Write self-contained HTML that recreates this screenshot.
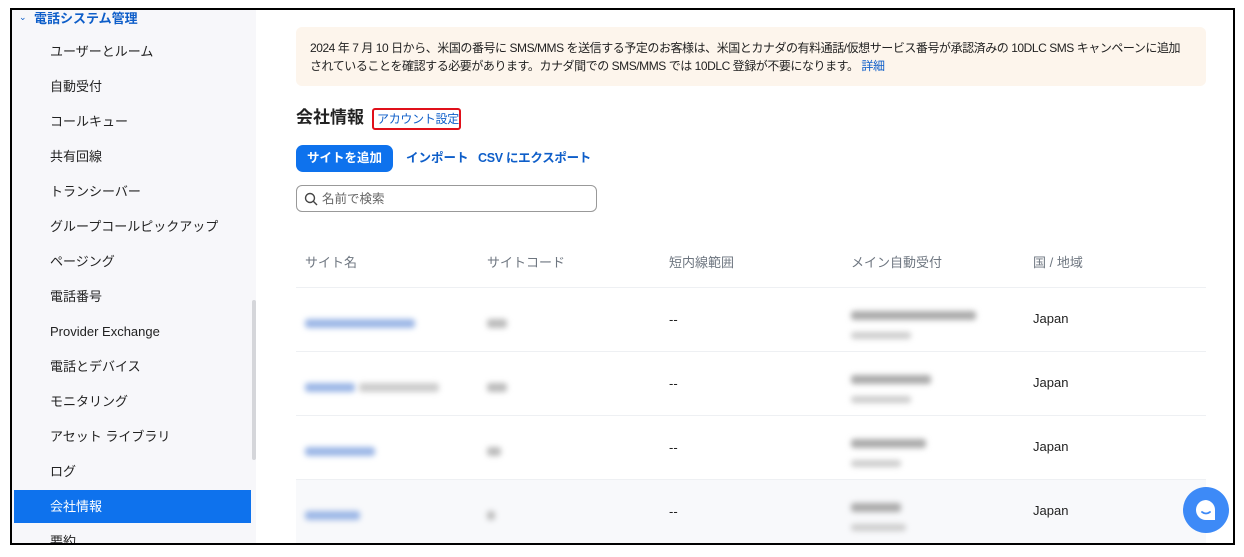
<!DOCTYPE html>
<html><head><meta charset="utf-8"><style>
*{box-sizing:border-box;margin:0;padding:0}
body{width:1244px;height:557px;background:#fff;font-family:"Liberation Sans","Noto Sans CJK JP",sans-serif;position:relative;overflow:hidden;color:#222;line-height:1.2}
#frame{position:absolute;left:10px;top:8px;width:1225px;height:537px;border:2px solid #000;overflow:hidden;background:#fff}
#side{position:absolute;left:0;top:0;width:244px;height:100%;background:#f7f7fa}
.it{position:absolute;left:38px;font-size:13px;color:#222;white-space:nowrap}
#sel{position:absolute;left:2px;top:480px;width:237px;height:33px;background:#0e72ed}
.bl{display:inline-block;filter:blur(3px);border-radius:3px}
.a{position:absolute;white-space:nowrap}
.hdr{font-size:13px;color:#6e7680}
.jp{font-size:13px;color:#222}
.dash{font-size:13px;color:#222}
.row{position:absolute;left:284px;width:910px;border-top:1px solid #eef0f3}
</style></head><body>
<div id="frame">
<div id="side">
 <div class="a" style="left:7px;top:2px;font-size:9px;color:#0e5ec9">⌄</div>
 <div class="a" style="left:22px;top:1px;font-size:13px;color:#0e5ec9;font-weight:bold">電話システム管理</div>
 <div class="it" style="top:34px">ユーザーとルーム</div>
 <div class="it" style="top:69px">自動受付</div>
 <div class="it" style="top:104px">コールキュー</div>
 <div class="it" style="top:139px">共有回線</div>
 <div class="it" style="top:174px">トランシーバー</div>
 <div class="it" style="top:209px">グループコールピックアップ</div>
 <div class="it" style="top:244px">ページング</div>
 <div class="it" style="top:279px">電話番号</div>
 <div class="it" style="top:314px">Provider Exchange</div>
 <div class="it" style="top:349px">電話とデバイス</div>
 <div class="it" style="top:384px">モニタリング</div>
 <div class="it" style="top:419px">アセット ライブラリ</div>
 <div class="it" style="top:454px">ログ</div>
 <div id="sel"></div>
 <div class="it" style="top:489px;color:#fff">会社情報</div>
 <div class="it" style="top:524px">要約</div>
 <div class="a" style="left:240px;top:290px;width:4px;height:160px;background:#d5d6da;border-radius:2px"></div>
</div>
<div class="a" style="left:284px;top:17px;width:910px;height:59px;background:#fdf5ec;border-radius:6px"></div>
<div class="a" style="left:298px;top:29px;font-size:12px;line-height:18px;color:#222;letter-spacing:-0.45px">2024 年 7 月 10 日から、米国の番号に SMS/MMS を送信する予定のお客様は、米国とカナダの有料通話/仮想サービス番号が承認済みの 10DLC SMS キャンペーンに追加<br>されていることを確認する必要があります。カナダ間での SMS/MMS では 10DLC 登録が不要になります。 <span style="color:#0e5ec9">詳細</span></div>
<div class="a" style="left:284px;top:98px;font-size:17px;font-weight:bold;color:#222">会社情報</div>
<div class="a" style="left:360px;top:98px;width:89px;height:22px;border:2px solid #e0101a;border-radius:3px;font-size:12px;color:#0e5ec9;line-height:18px;padding-left:3px;letter-spacing:-0.3px">アカウント設定</div>
<div class="a" style="left:284px;top:135px;width:97px;height:27px;background:#0e72ed;border-radius:7px;color:#fff;font-size:12.5px;font-weight:bold;line-height:27px;text-align:center">サイトを追加</div>
<div class="a" style="left:394px;top:141px;font-size:12.5px;color:#0e5ec9;font-weight:bold;line-height:15px">インポート</div>
<div class="a" style="left:466px;top:141px;font-size:12.5px;color:#0e5ec9;font-weight:bold;line-height:15px;letter-spacing:-0.3px">CSV にエクスポート</div>
<div class="a" style="left:284px;top:175px;width:301px;height:27px;border:1px solid #999;border-radius:6px"></div>
<svg class="a" style="left:292px;top:182px" width="14" height="14" viewBox="0 0 14 14"><circle cx="6" cy="6" r="4.5" fill="none" stroke="#444" stroke-width="1.4"/><path d="M9.3 9.3L13 13" stroke="#444" stroke-width="1.4"/></svg>
<div class="a" style="left:310px;top:182px;font-size:12.5px;color:#666;line-height:15px">名前で検索</div>
<div class="a hdr" style="left:293px;top:245px">サイト名</div>
<div class="a hdr" style="left:475px;top:245px">サイトコード</div>
<div class="a hdr" style="left:657px;top:245px">短内線範囲</div>
<div class="a hdr" style="left:839px;top:245px">メイン自動受付</div>
<div class="a hdr" style="left:1021px;top:245px">国 / 地域</div>
<div class="row" style="top:277px;height:64px"></div>
<div class="row" style="top:341px;height:64px"></div>
<div class="row" style="top:405px;height:64px"></div>
<div class="row" style="top:469px;height:70px;background:#f8f9fb"></div>
<div class="a" style="left:293px;top:304px"><span class="bl" style="width:110px;height:9px;background:#9bb6e6"></span></div>
<div class="a" style="left:475px;top:304px"><span class="bl" style="width:20px;height:9px;background:#bbb"></span></div>
<div class="a" style="left:839px;top:296px"><span class="bl" style="width:125px;height:9px;background:#aaa"></span></div>
<div class="a" style="left:839px;top:315px"><span class="bl" style="width:60px;height:7px;background:#ccc"></span></div>
<div class="a" style="left:293px;top:368px"><span class="bl" style="width:50px;height:9px;background:#9bb6e6"></span> <span class="bl" style="width:80px;height:9px;background:#ccc"></span></div>
<div class="a" style="left:475px;top:368px"><span class="bl" style="width:20px;height:9px;background:#bbb"></span></div>
<div class="a" style="left:839px;top:360px"><span class="bl" style="width:80px;height:9px;background:#aaa"></span></div>
<div class="a" style="left:839px;top:379px"><span class="bl" style="width:60px;height:7px;background:#ccc"></span></div>
<div class="a" style="left:293px;top:432px"><span class="bl" style="width:70px;height:9px;background:#9bb6e6"></span></div>
<div class="a" style="left:475px;top:432px"><span class="bl" style="width:14px;height:9px;background:#bbb"></span></div>
<div class="a" style="left:839px;top:424px"><span class="bl" style="width:75px;height:9px;background:#aaa"></span></div>
<div class="a" style="left:839px;top:443px"><span class="bl" style="width:50px;height:7px;background:#ccc"></span></div>
<div class="a" style="left:293px;top:496px"><span class="bl" style="width:55px;height:9px;background:#9bb6e6"></span></div>
<div class="a" style="left:475px;top:496px"><span class="bl" style="width:8px;height:9px;background:#bbb"></span></div>
<div class="a" style="left:839px;top:488px"><span class="bl" style="width:50px;height:9px;background:#aaa"></span></div>
<div class="a" style="left:839px;top:507px"><span class="bl" style="width:55px;height:7px;background:#ccc"></span></div>
<div class="a dash" style="left:657px;top:302px">--</div>
<div class="a dash" style="left:657px;top:366px">--</div>
<div class="a dash" style="left:657px;top:430px">--</div>
<div class="a dash" style="left:657px;top:494px">--</div>
<div class="a jp" style="left:1021px;top:301px">Japan</div>
<div class="a jp" style="left:1021px;top:365px">Japan</div>
<div class="a jp" style="left:1021px;top:429px">Japan</div>
<div class="a jp" style="left:1021px;top:493px">Japan</div>
</div>
<div class="a" style="left:1183px;top:487px;width:46px;height:46px;border-radius:50%;background:#3d8af7"></div>
<svg class="a" style="left:1193px;top:497px" width="26" height="26" viewBox="0 0 26 26"><path d="M13 3a10 10 0 1 0 0 20h9v-10A10 10 0 0 0 13 3z" fill="#fff"/><path d="M9 15q4 3 8 0" fill="none" stroke="#3d8af7" stroke-width="1.8" stroke-linecap="round"/></svg>
</body></html>
